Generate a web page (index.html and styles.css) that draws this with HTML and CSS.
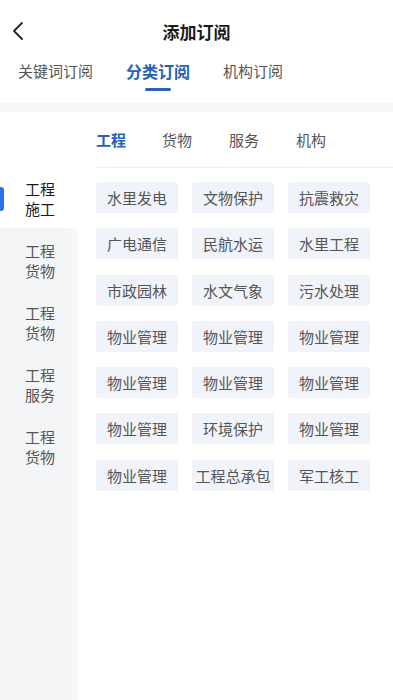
FILE: index.html
```html
<!DOCTYPE html>
<html lang="zh">
<head>
<meta charset="utf-8">
<link rel="stylesheet" href="styles.css">
</head>
<body>
<div class="page">
  <header class="header">
    <div class="navbar">
      <svg class="back" width="14" height="20" viewBox="0 0 14 20"><path d="M11 2 L3 10 L11 18" fill="none" stroke="#222" stroke-width="1.8" stroke-linecap="round" stroke-linejoin="round"/></svg>
      <div class="title">添加订阅</div>
    </div>
    <nav class="tabs">
      <div class="tab">关键词订阅</div>
      <div class="tab active">分类订阅</div>
      <div class="tab">机构订阅</div>
    </nav>
  </header>
  <div class="gap"></div>
  <main class="content">
    <aside class="sidebar">
      <div class="side-spacer"></div>
      <div class="side-item selected">工程<br>施工</div>
      <div class="side-rest">
        <div class="side-item">工程<br>货物</div>
        <div class="side-item">工程<br>货物</div>
        <div class="side-item">工程<br>服务</div>
        <div class="side-item">工程<br>货物</div>
      </div>
    </aside>
    <section class="main">
      <div class="subtabs">
        <div class="subtab active">工程</div>
        <div class="subtab">货物</div>
        <div class="subtab">服务</div>
        <div class="subtab">机构</div>
      </div>
      <div class="tags">
        <div class="tag">水里发电</div>
        <div class="tag">文物保护</div>
        <div class="tag">抗震救灾</div>
        <div class="tag">广电通信</div>
        <div class="tag">民航水运</div>
        <div class="tag">水里工程</div>
        <div class="tag">市政园林</div>
        <div class="tag">水文气象</div>
        <div class="tag">污水处理</div>
        <div class="tag">物业管理</div>
        <div class="tag">物业管理</div>
        <div class="tag">物业管理</div>
        <div class="tag">物业管理</div>
        <div class="tag">物业管理</div>
        <div class="tag">物业管理</div>
        <div class="tag">物业管理</div>
        <div class="tag">环境保护</div>
        <div class="tag">物业管理</div>
        <div class="tag">物业管理</div>
        <div class="tag">工程总承包</div>
        <div class="tag">军工核工</div>
      </div>
    </section>
  </main>
</div>
</body>
</html>
```
FILE: styles.css
```css
* { box-sizing: border-box; }
html, body { margin: 0; padding: 0; }
body {
  width: 393px;
  height: 700px;
  overflow: hidden;
  background: #fff;
  font-family: "Noto Sans CJK SC", "Noto Sans", sans-serif;
  color: #222;
}
.page { display: flex; flex-direction: column; height: 700px; }
.header { height: 103px; background: #fff; }
.navbar {
  height: 56px;
  position: relative;
  display: flex;
  align-items: center;
  justify-content: center;
}
.back { position: absolute; left: 11px; top: 21px; }
.title { font-size: 17px; font-weight: 700; color: #1a1a1a; margin-top: 6px; }
.tabs {
  display: flex;
  align-items: flex-start;
  padding-left: 18px;
  height: 47px;
}
.tab {
  font-size: 15px;
  color: #555;
  line-height: 24px;
  margin-top: 3px;
  position: relative;
}
.tab + .tab { margin-left: 33px; }
.tab.active {
  font-size: 16px;
  font-weight: 700;
  color: #2761b8;
}
.tab.active::after {
  content: "";
  position: absolute;
  left: 50%;
  bottom: -8px;
  width: 26px;
  height: 3px;
  margin-left: -13px;
  border-radius: 2px;
  background: #2761b8;
}
.gap { height: 9px; background: #f5f6f8; }
.content { flex: 1; display: flex; }
.sidebar {
  width: 79px;
  display: flex;
  flex-direction: column;
  background: #fff;
}
.side-spacer { height: 56px; }
.side-item {
  height: 62px;
  padding-left: 25px;
  display: flex;
  align-items: center;
  font-size: 15px;
  line-height: 20px;
  color: #555;
  position: relative;
}
.side-item.selected { color: #1a1a1a; }
.side-item.selected::before {
  content: "";
  position: absolute;
  left: 0;
  top: 19px;
  width: 4px;
  height: 24px;
  border-radius: 0 3px 3px 0;
  background: #2f6fe8;
}
.side-rest {
  flex: 1;
  background: linear-gradient(to right, #f4f5f7 0, #f4f5f7 72px, #f7f8fa 72px);
  border-top-right-radius: 11px;
  margin-top: -2px;
  padding-top: 2px;
}
.main { flex: 1; padding-left: 17px; }
.subtabs {
  height: 56px;
  display: flex;
  align-items: center;
  border-bottom: 1px solid #eeeff2;
}
.subtab { font-size: 15px; color: #555; width: 67px; margin-top: 0; }
.subtab.active { color: #2761b8; font-weight: 700; width: 66px; }
.tags {
  display: grid;
  grid-template-columns: repeat(3, 82px);
  column-gap: 14px;
  row-gap: 15.3px;
  padding-top: 14px;
}
.tag {
  height: 31px;
  background: #f1f3fa;
  border-radius: 3px;
  display: flex;
  align-items: center;
  justify-content: center;
  font-size: 15px;
  color: #555;
  white-space: nowrap;
}
```
